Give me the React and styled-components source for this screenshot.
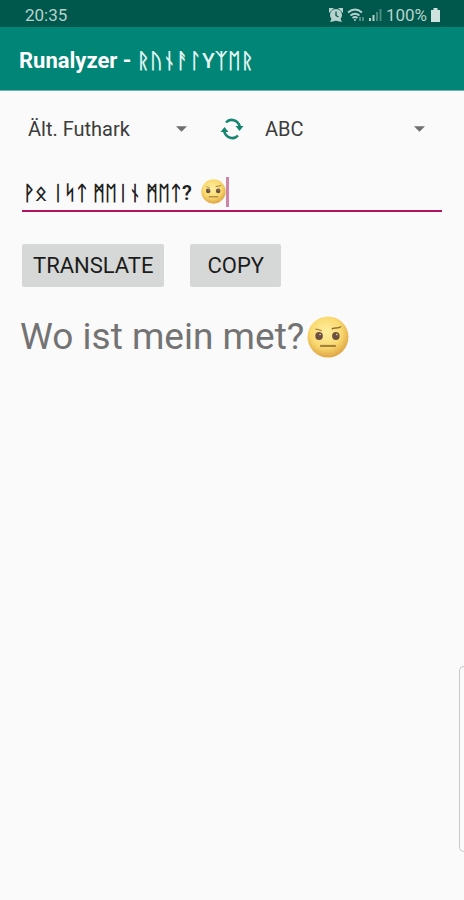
import React, { useState } from 'react';
import styled, { createGlobalStyle } from 'styled-components';

const GlobalStyle = createGlobalStyle`
  * {
    box-sizing: border-box;
  }

  body {
    margin: 0;
    background-color: #FAFAFA;
    font-family: Roboto, "Noto Sans", "DejaVu Sans", sans-serif;
  }
`;

const Screen = styled.div`
  position: relative;
  min-height: 100vh;

  display: flex;
  flex-direction: column;
`;

const StatusBar = styled.div`
  height: 27px;
  padding: 2px 24px 0 25px;

  display: flex;
  align-items: center;
  justify-content: space-between;

  background-color: #00574B;
  color: #B8D2CE;
  font-size: 17px;
`;

const StatusIcons = styled.div`
  display: flex;
  align-items: center;
  gap: 4px;
`;

const AppBar = styled.header`
  height: 64px;
  padding: 3px 19px 0;

  display: flex;
  align-items: center;

  background-color: #008577;
  border-bottom: 1px solid #6FB5AD;
`;

const AppTitle = styled.h1`
  margin: 0;

  color: #FFFFFF;
  font-size: 22px;
  font-weight: 700;
  white-space: nowrap;
`;

const RuneTitle = styled.span`
  color: #E4F5F2;
  font-size: 21px;
`;

const ThinLetter = styled.span`
  font-weight: 500;
`;

const Content = styled.main`
  padding: 18px 22px;

  display: flex;
  flex-direction: column;
`;

const LanguageRow = styled.div`
  display: grid;
  grid-template-columns: 182px 55px 1fr;
  align-items: center;
`;

const SpinnerContainer = styled.div`
  display: grid;
  align-items: center;

  & > * {
    grid-area: 1 / 1;
  }
`;

const Spinner = styled.select`
  width: 100%;
  height: 40px;
  padding: 0 24px 0 6px;

  appearance: none;
  border: none;
  background: transparent;
  color: #3C3C3C;
  font-family: inherit;
  font-size: 20px;
`;

const SpinnerArrow = styled.svg`
  margin-right: 17px;
  justify-self: end;
  pointer-events: none;
`;

const SwapButton = styled.button`
  height: 40px;
  padding: 0 0 0 16px;

  display: flex;
  align-items: center;

  border: none;
  background: transparent;
`;

const InputField = styled.div`
  height: 39px;
  margin-top: 24px;

  display: flex;
  align-items: center;

  border-bottom: 2px solid #B5145C;
`;

const RuneInput = styled.input`
  width: 179px;
  padding: 2px 0 0 1px;

  border: none;
  outline: none;
  background: transparent;
  color: #202020;
  font-family: inherit;
  font-size: 20px;
  font-weight: 600;
`;

const Caret = styled.span`
  width: 3px;
  height: 30px;

  background-color: #D283A8;
`;

const ButtonRow = styled.div`
  margin-top: 32px;

  display: flex;
  gap: 26px;
`;

const ActionButton = styled.button`
  height: 43px;
  padding: 0 ${props => (props.$wide ? '17px' : '11px')};

  border: none;
  border-radius: 2px;
  background-color: #D6D8D7;
  color: #1C1C1C;
  font-family: inherit;
  font-size: 22px;
`;

const Result = styled.p`
  margin: 28px 0 0;

  display: flex;
  align-items: center;
  gap: 3px;

  color: #737373;
  font-size: 37px;
  line-height: 44px;
  text-indent: -2px;
`;

const EdgePanel = styled.div`
  width: 5px;
  height: 186px;

  position: absolute;
  top: 666px;
  right: 0;

  border: 1px solid #C8C8C8;
  border-right: none;
  border-radius: 5px 0 0 5px;
`;

const RaisedBrow = ({ size }) => (
  <svg width={size} height={size} viewBox="0 0 40 40" aria-label="🤨" role="img">
    <defs>
      <radialGradient id={`face-${size}`} cx="45%" cy="38%" r="62%">
        <stop offset="0" stopColor="#FFEFA0" />
        <stop offset="0.6" stopColor="#FADA70" />
        <stop offset="1" stopColor="#DFA544" />
      </radialGradient>
    </defs>
    <circle cx="20" cy="20" r="19.5" fill={`url(#face-${size})`} />
    <ellipse cx="11.5" cy="19" rx="3.6" ry="3.8" fill="#6A5040" />
    <ellipse cx="27.5" cy="19" rx="3.6" ry="3.8" fill="#6A5040" />
    <circle cx="12.5" cy="17.5" r="0.9" fill="#CDB890" />
    <circle cx="28.5" cy="17.5" r="0.9" fill="#CDB890" />
    <path d="M8 12.5q3 0 6 1.5" stroke="#A78343" strokeWidth="1.2" fill="none" />
    <path d="M23.5 12.5c3-2 6 0 9-2.5" stroke="#92703B" strokeWidth="1.4" fill="none" />
    <path d="M12.5 28.5h15" stroke="#A4803D" strokeWidth="2" />
  </svg>
);

const Arrow = () => (
  <SpinnerArrow width="11" height="6" viewBox="0 0 12 6">
    <path d="M0 0h12l-6 6z" fill="#6F6F6F" />
  </SpinnerArrow>
);

const SwapIcon = () => (
  <svg width="24" height="22" viewBox="0 0 24 22" fill="none" stroke="#14866F" strokeWidth="2.6">
    <path d="M6 4.5C10 0 18 1.5 20 9" />
    <path d="M18 17.5C14 22 6 20.5 4 13" />
    <path d="M15.5 8h8l-4 5z" fill="#14866F" stroke="none" />
    <path d="M.5 14h8l-4-5z" fill="#14866F" stroke="none" />
  </svg>
);

const AlarmIcon = () => (
  <svg width="14" height="14" viewBox="0 0 14 14" fill="#B8D2CE">
    <path d="M0 0h5L0 5zM14 0h-5l5 5zM1 14l2-4 3 3zM13 14l-2-4-3 3z" />
    <circle cx="7" cy="7" r="6" />
    <path d="M7 3.5V7.5l2.5 1.5" stroke="#00574B" strokeWidth="1.3" fill="none" />
  </svg>
);

const WifiIcon = () => (
  <svg width="18" height="14" viewBox="0 0 18 14" fill="none" stroke="#B8D2CE" strokeWidth="1.8">
    <path d="M1 4.5Q8 -1.5 15 4.5M3.5 7.5Q8 4 12.5 7.5M5.5 10Q8 8 10.5 10" />
    <circle cx="8" cy="12" r="1" fill="#B8D2CE" stroke="none" />
    <path d="M13 9v4M16 9v4" stroke="#6B9E95" strokeWidth="1.5" />
  </svg>
);

const SignalIcon = () => (
  <svg width="13" height="13" viewBox="0 0 13 13" fill="#B8D2CE">
    <path d="M0 10h2v3H0zM3.5 7h2v6h-2z" />
    <path d="M7 4h2v9H7zM10.5 1h2v12h-2z" fill="#4C8B80" />
  </svg>
);

const BatteryIcon = () => (
  <svg width="9" height="14" viewBox="0 0 9 14" fill="#D0E2DF">
    <path d="M2.5 0h4v2H9v12H0V2h2.5z" />
  </svg>
);

const App = () => {
  const [text, setText] = useState('ᚹᛟ ᛁᛋᛏ ᛗᛖᛁᚾ ᛗᛖᛏ?');

  return (
    <Screen>
      <GlobalStyle />
      <StatusBar>
        <span>20:35</span>
        <StatusIcons>
          <AlarmIcon />
          <WifiIcon />
          <SignalIcon />
          <span>100%</span>
          <BatteryIcon />
        </StatusIcons>
      </StatusBar>
      <AppBar>
        <AppTitle>
          Runalyzer - <RuneTitle>ᚱᚢᚾᚨᛚ<ThinLetter>Y</ThinLetter>ᛉᛖᚱ</RuneTitle>
        </AppTitle>
      </AppBar>
      <Content>
        <LanguageRow>
          <SpinnerContainer>
            <Spinner aria-label="Source alphabet">
              <option>Ält. Futhark</option>
            </Spinner>
            <Arrow />
          </SpinnerContainer>
          <SwapButton type="button" aria-label="Swap alphabets"><SwapIcon /></SwapButton>
          <SpinnerContainer>
            <Spinner aria-label="Target alphabet">
              <option>ABC</option>
            </Spinner>
            <Arrow />
          </SpinnerContainer>
        </LanguageRow>
        <InputField>
          <RuneInput aria-label="Text" value={text} onChange={e => setText(e.target.value)} />
          <RaisedBrow size={25} />
          <Caret />
        </InputField>
        <ButtonRow>
          <ActionButton type="button">TRANSLATE</ActionButton>
          <ActionButton type="button" $wide>COPY</ActionButton>
        </ButtonRow>
        <Result>Wo ist mein met?<RaisedBrow size={42} /></Result>
      </Content>
      <EdgePanel />
    </Screen>
  );
};

export default App;
